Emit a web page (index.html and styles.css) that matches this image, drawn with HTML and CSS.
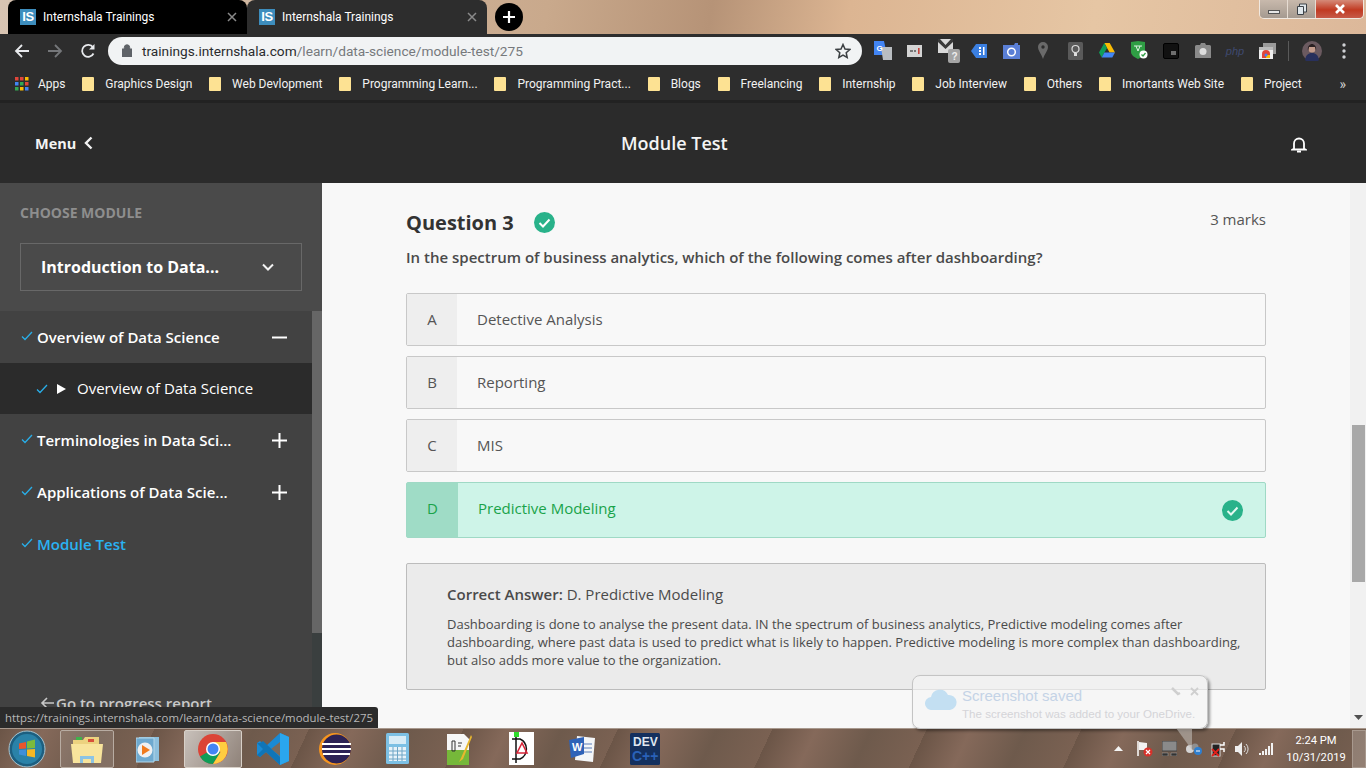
FILE: index.html
```html
<!DOCTYPE html>
<html lang="en">
<head>
    <meta charset="UTF-8">
    <meta name="viewport" content="width=device-width, initial-scale=1.0">
    <title>Internshala Trainings</title>
    <link rel="stylesheet" href="styles.css">
</head>
<body>
    <div class="tabstrip">
        <div class="tab">
            <span class="favicon">IS</span>
            <span class="tab-title">Internshala Trainings</span>
            <svg class="tab-close" width="10" height="10" viewBox="0 0 10 10"><path d="M1 1l8 8M9 1l-8 8" stroke="#8a8a8a" stroke-width="1.5"/></svg>
        </div>
        <div class="tab tab-active">
            <span class="favicon">IS</span>
            <span class="tab-title">Internshala Trainings</span>
            <svg class="tab-close" width="10" height="10" viewBox="0 0 10 10"><path d="M1 1l8 8M9 1l-8 8" stroke="#8a8a8a" stroke-width="1.5"/></svg>
        </div>
        <div class="new-tab">
            <svg width="14" height="14" viewBox="0 0 14 14"><path d="M7 1v12M1 7h12" stroke="#fff" stroke-width="2.2"/></svg>
        </div>
        <div class="window-controls">
            <div class="win-btn"><span class="win-min"></span></div>
            <div class="win-btn">
                <svg width="12" height="13" viewBox="0 0 12 13"><path d="M3.5 3V1h7v8H8M1.500 3.500h6v8h-6z" fill="#dfe6ea" stroke="#3c4248"/></svg>
            </div>
            <div class="win-btn win-close">
                <svg width="12" height="10" viewBox="0 0 12 10"><path d="M2 1l8 8M10 1l-8 8" stroke="#fff" stroke-width="2.600"/></svg>
            </div>
        </div>
    </div>

    <div class="toolbar">
        <svg class="nav-icon" width="16" height="16" viewBox="0 0 16 16"><path d="M15 8H2M8 2L2 8l6 6" fill="none" stroke="#e8eaed" stroke-width="1.800"/></svg>
        <svg class="nav-icon" width="16" height="16" viewBox="0 0 16 16"><path d="M1 8h13M8 2l6 6-6 6" fill="none" stroke="#75777a" stroke-width="1.800"/></svg>
        <svg class="nav-icon" width="16" height="16" viewBox="0 0 16 16"><path d="M13.500 10.500A6 6 0 1 1 13 4.300" fill="none" stroke="#e8eaed" stroke-width="1.800"/><path d="M14.500 1v5.500H9z" fill="#e8eaed"/></svg>
        <div class="omnibox">
            <svg width="10" height="13" viewBox="0 0 10 13"><path d="M0 5h10v8H0zM2.300 5V3.500a2.700 2.700 0 0 1 5.400 0V5" fill="#5f6368" stroke="#5f6368" stroke-width="1"/></svg>
            <span class="url"><span class="url-host">trainings.internshala.com</span>/learn/data-science/module-test/275</span>
            <svg class="star" width="16" height="16" viewBox="0 0 16 16"><path d="M8 1.500l2 4.500 4.800.5-3.600 3.200 1 4.800L8 12.100l-4.200 2.400 1-4.800L1.200 6.500 6 6z" fill="none" stroke="#3c4043" stroke-width="1.500"/></svg>
        </div>
        <div class="extensions">
            <div class="ext"><svg width="18" height="20" viewBox="0 0 18 20"><path d="M0 0h10l3 14H0z" fill="#4285f4"/><path d="M7 6h11v13H9z" fill="#b9bdc1"/><text x="2.500" y="10" font-size="8" font-weight="700" fill="#fff" font-family="Liberation Sans">G</text></svg></div>
            <div class="ext"><svg width="16" height="14" viewBox="0 0 16 14"><rect y="1" width="15" height="12" fill="#d4d4d4"/><path d="M3 6h3v2H3zM7 6h2v2H7z" fill="#777"/><path d="M11 4h1.600v6H11z" fill="#c5443c"/></svg></div>
            <div class="ext ext-mail"><svg width="24" height="26" viewBox="0 0 24 26"><path d="M0 1h15v14H0z" fill="#d9d9d9"/><path d="M2 1l5.500 6L13 1l2 0v3l-7.500 7L0 4V1z" fill="#3a3a3a"/><rect x="10" y="11" width="12" height="14" rx="2" fill="#a4a4a4"/><text x="13.500" y="22" font-size="10" font-weight="700" fill="#eee" font-family="Liberation Sans">?</text></svg></div>
            <div class="ext"><svg width="16" height="16" viewBox="0 0 16 16"><path d="M5 1h11v14H5L0 8z" fill="#3b7fe0"/><path d="M8 4h2v2H8zM8 7h2v2H8zM8 10h2v2H8zM12 4h1.500v8H12z" fill="#fff"/></svg></div>
            <div class="ext"><svg width="17" height="16" viewBox="0 0 17 16"><path d="M0 2h11l1-2h3v2h2v14H0z" fill="#5a7fd6"/><circle cx="8.500" cy="9" r="3.800" fill="none" stroke="#fff" stroke-width="1.500"/></svg></div>
            <div class="ext"><svg width="10" height="17" viewBox="0 0 10 17"><path d="M5 0a5 5 0 0 1 5 5c0 3.500-3.500 7-5 12C3.500 12 0 8.500 0 5a5 5 0 0 1 5-5z" fill="#6a6a6a"/><circle cx="5" cy="5" r="1.700" fill="#2d2d2d"/></svg></div>
            <div class="ext"><svg width="15" height="18" viewBox="0 0 15 18"><rect width="15" height="18" rx="1.500" fill="#5a5a5a"/><circle cx="7.500" cy="7" r="3.500" fill="none" stroke="#ddd" stroke-width="1.200"/><path d="M6 11h3v3H6z" fill="#ddd"/></svg></div>
            <div class="ext"><svg width="16" height="15" viewBox="0 0 16 15"><path d="M5.300 0h5.400L16 9.500H10.600z" fill="#fbbc04"/><path d="M5.300 0L0 9.500l2.700 5L8 5z" fill="#0f9d58"/><path d="M2.700 14.500h10.600L16 9.500H5.400z" fill="#4285f4"/></svg></div>
            <div class="ext"><svg width="17" height="19" viewBox="0 0 17 19"><path d="M0 1l7-1 7 1v10c0 3-3 5-7 7-4-2-7-4-7-7z" fill="#2f9e44"/><path d="M3 5h8M5 5l2 5M9 5l-2 5" stroke="#dff3e3" fill="none"/><circle cx="12.500" cy="13.500" r="4" fill="#fff"/><path d="M10.500 13.500l1.500 1.500 2.500-3" stroke="#2f9e44" fill="none" stroke-width="1.300"/></svg></div>
            <div class="ext"><svg width="16" height="16" viewBox="0 0 16 16"><rect x=".5" y=".5" width="15" height="15" rx="1.500" fill="#111" stroke="#000"/><rect x="8" y="8" width="5" height="4" fill="#6e6e6e"/></svg></div>
            <div class="ext"><svg width="16" height="15" viewBox="0 0 16 15"><path d="M1.500 2H5l1-2h4l1 2h3.500A1.500 1.500 0 0 1 16 3.500V15H0V3.500A1.500 1.500 0 0 1 1.500 2z" fill="#8a8a8a"/><circle cx="8" cy="8.500" r="3.500" fill="#ddd"/></svg></div>
            <div class="ext"><span class="php">php</span></div>
            <div class="ext"><svg width="17" height="16" viewBox="0 0 17 16"><path d="M4 0h13v11H4z" fill="#9a9a9a"/><path d="M0 4h14v12H0z" fill="#eee"/><path d="M0 4h14v3H0z" fill="#bbb"/><path d="M3 15V11a4 4 0 0 1 8 0v4z" fill="#e0463a"/><path d="M7 15v-3h4v3z" fill="#fbbc04"/><circle cx="7" cy="12" r="1.500" fill="#4285f4"/></svg></div>
        </div>
        <div class="toolbar-divider"></div>
        <svg class="avatar" width="20" height="20" viewBox="0 0 20 20"><circle cx="10" cy="10" r="10" fill="#6b5a60"/><path d="M3 19c1-5 3-7 7-7s6 2 7 7a10 10 0 0 1-14 0z" fill="#28305c"/><circle cx="10" cy="8" r="3.500" fill="#c49c8c"/><path d="M6 10c-1-5 2-7 4-7s5 2 4 7l-1-4H7z" fill="#2a2022"/></svg>
        <svg class="menu-dots" width="4" height="16" viewBox="0 0 4 16"><circle cx="2" cy="2" r="1.700" fill="#cfd1d4"/><circle cx="2" cy="8" r="1.700" fill="#cfd1d4"/><circle cx="2" cy="14" r="1.700" fill="#cfd1d4"/></svg>
    </div>

    <div class="bookmarks">
        <div class="bookmark apps">
            <svg width="14" height="14" viewBox="0 0 14 14"><path d="M0 0h3.500v3.500H0z" fill="#e0463a"/><path d="M5 0h3.500v3.500H5z" fill="#e0463a"/><path d="M10 0h3.500v3.500H10z" fill="#fbbc04"/><path d="M0 5h3.500v3.500H0z" fill="#4285f4"/><path d="M5 5h3.500v3.500H5z" fill="#34a853"/><path d="M10 5h3.500v3.500H10z" fill="#e0463a"/><path d="M0 10h3.500v3.500H0z" fill="#34a853"/><path d="M5 10h3.500v3.500H5z" fill="#fbbc04"/><path d="M10 10h3.500v3.500H10z" fill="#4285f4"/></svg>
            <span>Apps</span>
        </div>
        <div class="bookmark"><span class="folder"></span><span>Graphics Design</span></div>
        <div class="bookmark"><span class="folder"></span><span>Web Devlopment</span></div>
        <div class="bookmark"><span class="folder"></span><span>Programming Learn...</span></div>
        <div class="bookmark"><span class="folder"></span><span>Programming Pract...</span></div>
        <div class="bookmark"><span class="folder"></span><span>Blogs</span></div>
        <div class="bookmark"><span class="folder"></span><span>Freelancing</span></div>
        <div class="bookmark"><span class="folder"></span><span>Internship</span></div>
        <div class="bookmark"><span class="folder"></span><span>Job Interview</span></div>
        <div class="bookmark"><span class="folder"></span><span>Others</span></div>
        <div class="bookmark"><span class="folder"></span><span>Imortants Web Site</span></div>
        <div class="bookmark"><span class="folder"></span><span>Project</span></div>
        <span class="more-bookmarks">»</span>
    </div>

    <header class="app-header">
        <div class="menu-toggle">
            <span>Menu</span>
            <svg width="9" height="14" viewBox="0 0 9 14"><path d="M7.500 1.500L2 7l5.500 5.500" fill="none" stroke="#f2f2f2" stroke-width="2.400"/></svg>
        </div>
        <div class="page-title">Module Test</div>
        <svg class="bell" width="16" height="17" viewBox="0 0 16 17"><path d="M3 12.500V7.500a5 5 0 0 1 10 0v5l1.500 1H1.500z" fill="none" stroke="#fff" stroke-width="1.800"/><path d="M6 15.500h4" stroke="#fff" stroke-width="2"/></svg>
    </header>

    <div class="main">
        <aside class="sidebar">
            <div class="sidebar-top">
                <div class="choose-label">CHOOSE MODULE</div>
                <div class="module-select">
                    <span>Introduction to Data...</span>
                    <svg width="12" height="8" viewBox="0 0 12 8"><path d="M1 1.500l5 5 5-5" fill="none" stroke="#f2f2f2" stroke-width="2"/></svg>
                </div>
            </div>
            <div class="tree-wrap">
                <div class="tree">
                    <div class="tree-row">
                        <svg class="tick" width="12" height="10" viewBox="0 0 12 10"><path d="M1 5.500l3 3L11 1" fill="none" stroke="#29aee8" stroke-width="1.300"/></svg>
                        <span class="tree-text">Overview of Data Science</span>
                        <svg class="tree-toggle" width="15" height="15" viewBox="0 0 15 15"><path d="M0 7.500h15" stroke="#fff" stroke-width="2"/></svg>
                    </div>
                    <div class="tree-row tree-sub">
                        <svg class="tick" width="12" height="10" viewBox="0 0 12 10"><path d="M1 5.500l3 3L11 1" fill="none" stroke="#29aee8" stroke-width="1.300"/></svg>
                        <svg class="play" width="9" height="10" viewBox="0 0 9 10"><path d="M0 0l9 5-9 5z" fill="#fff"/></svg>
                        <span class="tree-text">Overview of Data Science</span>
                    </div>
                    <div class="tree-row">
                        <svg class="tick" width="12" height="10" viewBox="0 0 12 10"><path d="M1 5.500l3 3L11 1" fill="none" stroke="#29aee8" stroke-width="1.300"/></svg>
                        <span class="tree-text">Terminologies in Data Sci...</span>
                        <svg class="tree-toggle" width="15" height="15" viewBox="0 0 15 15"><path d="M0 7.500h15M7.500 0v15" stroke="#fff" stroke-width="2"/></svg>
                    </div>
                    <div class="tree-row">
                        <svg class="tick" width="12" height="10" viewBox="0 0 12 10"><path d="M1 5.500l3 3L11 1" fill="none" stroke="#29aee8" stroke-width="1.300"/></svg>
                        <span class="tree-text">Applications of Data Scie...</span>
                        <svg class="tree-toggle" width="15" height="15" viewBox="0 0 15 15"><path d="M0 7.500h15M7.500 0v15" stroke="#fff" stroke-width="2"/></svg>
                    </div>
                    <div class="tree-row tree-current">
                        <svg class="tick" width="12" height="10" viewBox="0 0 12 10"><path d="M1 5.500l3 3L11 1" fill="none" stroke="#29aee8" stroke-width="1.300"/></svg>
                        <span class="tree-text">Module Test</span>
                    </div>
                    <div class="progress-link">
                        <svg width="14" height="12" viewBox="0 0 14 12"><path d="M14 6H2M7 1L2 6l5 5" fill="none" stroke="#c8c8c8" stroke-width="1.600"/></svg>
                        <span>Go to progress report</span>
                    </div>
                </div>
                <div class="side-scroll"><div class="side-thumb"></div></div>
            </div>
        </aside>

        <main class="content">
            <div class="question-head">
                <h2>Question 3</h2>
                <svg class="check-badge" width="21" height="21" viewBox="0 0 21 21"><circle cx="10.500" cy="10.500" r="10.500" fill="#29b28a"/><path d="M5.500 11l3.500 3.500 6.500-7" fill="none" stroke="#fff" stroke-width="2"/></svg>
                <span class="marks">3 marks</span>
            </div>
            <p class="question-text">In the spectrum of business analytics, which of the following comes after dashboarding?</p>

            <div class="options">
                <div class="option"><div class="option-key">A</div><div class="option-text">Detective Analysis</div></div>
                <div class="option"><div class="option-key">B</div><div class="option-text">Reporting</div></div>
                <div class="option"><div class="option-key">C</div><div class="option-text">MIS</div></div>
                <div class="option option-correct">
                    <div class="option-key">D</div>
                    <div class="option-text">Predictive Modeling</div>
                    <svg class="check-badge" width="21" height="21" viewBox="0 0 21 21"><circle cx="10.500" cy="10.500" r="10.500" fill="#29b28a"/><path d="M5.500 11l3.500 3.500 6.500-7" fill="none" stroke="#e4f8f1" stroke-width="2"/></svg>
                </div>
            </div>

            <div class="answer-box">
                <div class="answer-title"><b>Correct Answer:</b> D. Predictive Modeling</div>
                <p class="answer-body">Dashboarding is done to analyse the present data. IN the spectrum of business analytics, Predictive modeling comes after dashboarding, where past data is used to predict what is likely to happen. Predictive modeling is more complex than dashboarding, but also adds more value to the organization.</p>
            </div>
        </main>

        <div class="page-scroll">
            <div class="page-thumb"></div>
            <svg class="page-arrow" width="9" height="5" viewBox="0 0 9 5"><path d="M0 0h9L4.500 5z" fill="#505050"/></svg>
        </div>

        <div class="status-bubble">https://trainings.internshala.com/learn/data-science/module-test/275</div>
    </div>

    <footer class="taskbar">
        <div class="start-orb">
            <svg width="38" height="38" viewBox="0 0 38 38">
                <circle cx="19" cy="19" r="18" fill="#1d5f80" stroke="#a9c4cf" stroke-width="1"/>
                <circle cx="19" cy="19" r="15" fill="#2a82a8"/>
                <path d="M11 13.500l7-1.500v6.500l-7 .5z" fill="#e8562c"/>
                <path d="M19 11.500l8-2v8.500l-8 .5z" fill="#7cba3c"/>
                <path d="M11 20l7-.5v6.500l-7-1.500z" fill="#3f8fd8"/>
                <path d="M19 19.500l8-.5v8.500l-8-1.500z" fill="#f5b824"/>
            </svg>
        </div>
        <div class="task-item task-open">
            <svg width="32" height="30" viewBox="0 0 32 30"><path d="M2 6h10l2-3h14v24H2z" fill="#ecd27f"/><path d="M5 3h6v3H5z" fill="#3fb24a"/><path d="M17 5h6v3h-6z" fill="#d8503a"/><path d="M0 10h32l-2 19H2z" fill="#f8e49c"/><path d="M9 29v-7h14v7h-3v-4h-8v4z" fill="#8cc4e4"/></svg>
        </div>
        <div class="task-item">
            <svg width="26" height="28" viewBox="0 0 26 28"><path d="M3 2h20v24H3z" fill="#8dbfdc"/><path d="M0 3h18v24H0z" fill="#6ea9cf" stroke="#b4d6e8"/><circle cx="9" cy="15" r="7.500" fill="#f0f0f0"/><path d="M6 10l8 5-8 5z" fill="#f07a1c"/></svg>
        </div>
        <div class="task-item task-active">
            <svg width="30" height="30" viewBox="0 0 30 30"><circle cx="15" cy="15" r="15" fill="#db4437"/><path d="M15 15L2 22.500A15 15 0 0 0 15 30l7.500-12z" fill="#0f9d58"/><path d="M15 8h13a15 15 0 0 1-13 22l7.500-12z" fill="#ffcd40"/><path d="M2 7.500l6.500 11L15 15z" fill="#db4437"/><circle cx="15" cy="15" r="7" fill="#fff"/><circle cx="15" cy="15" r="5.500" fill="#4285f4"/></svg>
        </div>
        <div class="task-item">
            <svg width="32" height="32" viewBox="0 0 32 32"><path d="M23 0l9 4v24l-9 4-14-13-6 5-3-2v-12l3-2 6 5z" fill="#1a8ad4"/><path d="M23 9l-9 7 9 7z" fill="#7b6a5c"/><path d="M23 0l9 4v24l-9 4z" fill="#2aa6ee"/><path d="M3 10l3-2 17 16v8L9 19l-6 5-3-2 6-6-6-6z" fill="#0f75b8"/></svg>
        </div>
        <div class="task-item">
            <svg width="32" height="32" viewBox="0 0 32 32"><circle cx="16" cy="16" r="16" fill="#f6951e"/><circle cx="17.500" cy="16" r="14.500" fill="#2c2255"/><path d="M3 11h29M3 16h29M4 21h27" stroke="#fff" stroke-width="2"/></svg>
        </div>
        <div class="task-item">
            <svg width="23" height="31" viewBox="0 0 23 31"><rect width="23" height="31" rx="1.500" fill="#7cc0e4"/><rect x="3" y="3" width="17" height="8" fill="#d8ecf6"/><path d="M3 14h17v14H3z" fill="#e8f3f9"/><path d="M3 18h17M3 22h17M3 26h17M7 14v14M11.500 14v14M16 14v14" stroke="#6ea6c6"/></svg>
        </div>
        <div class="task-item">
            <svg width="26" height="32" viewBox="0 0 26 32"><path d="M1 1h17l5 5v26H1z" fill="#f6f6f6"/><path d="M1 17h22v15H1z" fill="#76b83a"/><path d="M6 8v10h3V8z" fill="none" stroke="#333"/><path d="M12 10h4M12 13h3" stroke="#333"/><path d="M25 2L15 25l-2 4 4-3L26 4z" fill="#e8b72e"/></svg>
        </div>
        <div class="task-item">
            <svg width="25" height="33" viewBox="0 0 25 33"><rect width="25" height="33" fill="#fff"/><rect x="5" y="0" width="5" height="5" fill="#2fdc2a"/><path d="M7 5v26M3 7h8a11 11 0 0 1 0 20H3" fill="none" stroke="#111" stroke-width="1.500"/><path d="M13 11l-5 10h10z" fill="none" stroke="#d8263a" stroke-width="1.600"/></svg>
        </div>
        <div class="task-item">
            <svg width="28" height="30" viewBox="0 0 28 30"><path d="M8 2l18 2-2 24-18-2z" fill="#f4f6f8"/><path d="M0 6l15-3v17L2 24z" fill="#2f63b8"/><path d="M15 10h8M15 14h8M15 18h8" stroke="#5a7cb8"/><text x="3" y="17" font-size="11" font-weight="700" fill="#fff" font-family="Liberation Sans">W</text></svg>
        </div>
        <div class="task-item">
            <svg width="30" height="32" viewBox="0 0 30 32"><rect width="30" height="32" rx="1.500" fill="#14305e"/><text x="3" y="13" font-size="12" font-weight="700" fill="#dfe6f0" font-family="Liberation Sans">DEV</text><text x="2" y="28" font-size="14" font-weight="700" fill="#2a62b8" font-family="Liberation Sans">C++</text></svg>
        </div>

        <div class="tray">
            <svg class="tray-up" width="9" height="5" viewBox="0 0 9 5"><path d="M4.500 0L9 5H0z" fill="#f4f4f4"/></svg>
            <svg width="16" height="16" viewBox="0 0 16 16"><path d="M1 0v15" stroke="#fff" stroke-width="1.500"/><path d="M2 1l8 1v7H2z" fill="#f2f2f2"/><circle cx="11" cy="11" r="4.500" fill="#d8312a"/><path d="M9 9l4 4M13 9l-4 4" stroke="#fff" stroke-width="1.200"/></svg>
            <svg width="15" height="15" viewBox="0 0 15 15"><rect width="15" height="10" fill="#8a8a8a" stroke="#444"/><path d="M0 12h6v3H0zM9 12h6v3H9z" fill="#333" stroke="#aaa" stroke-width=".5"/></svg>
            <svg width="16" height="12" viewBox="0 0 16 12"><circle cx="4" cy="6" r="4" fill="#d4d4d4"/><circle cx="9" cy="4" r="3.500" fill="#8f8f8f"/><circle cx="12" cy="8" r="4" fill="#2e7fd0"/><path d="M10 8h4" stroke="#fff"/></svg>
            <svg width="15" height="16" viewBox="0 0 15 16"><rect x="1" y="3" width="8" height="12" fill="#222" stroke="#ddd"/><path d="M9 4h4V1M9 8h4v3" fill="none" stroke="#fff" stroke-width="1.500"/><path d="M1 8l7 7M8 8l-7 7" stroke="#e0201a" stroke-width="1.800"/></svg>
            <svg width="15" height="14" viewBox="0 0 15 14"><path d="M0 4h3l4-4v14l-4-4H0z" fill="#eee"/><path d="M9 4a4 4 0 0 1 0 6M11 2a7 7 0 0 1 0 10" fill="none" stroke="#ddd"/></svg>
            <svg width="15" height="12" viewBox="0 0 15 12"><path d="M0 10h2v2H0zM3 8h2v4H3zM6 6h2v6H6zM9 3h2v9H9zM12 0h2v12h-2z" fill="#f2f2f2"/></svg>
            <div class="clock">
                <span>2:24 PM</span>
                <span>10/31/2019</span>
            </div>
        </div>
        <div class="show-desktop"></div>
    </footer>

    <div class="toast">
        <svg width="32" height="22" viewBox="0 0 32 22"><path d="M7 22a6.500 6.500 0 0 1-1-13 9 9 0 0 1 17-2 7.500 7.500 0 0 1 2 15z" fill="#c3dff2"/></svg>
        <div class="toast-text">
            <div class="toast-title">Screenshot saved</div>
            <div class="toast-body">The screenshot was added to your OneDrive.</div>
        </div>
        <svg class="toast-tools" width="28" height="10" viewBox="0 0 28 10"><path d="M1 1l6 6 2-1" stroke="#cfcfcf" stroke-width="2.500" fill="none"/><path d="M20 1l7 7M27 1l-7 7" stroke="#cfcfcf" stroke-width="1.800"/></svg>
    </div>
    <div class="toast-tail"></div>
</body>
</html>
```

FILE: styles.css
```css
* {
    box-sizing: border-box;
}
html, body {
    height: 100%;
}
body {
    margin: 0;
    width: 1366px;
    height: 768px;
    overflow: hidden;
    display: flex;
    flex-direction: column;
    position: relative;
    font-family: "Open Sans", Arial, sans-serif;
    background-color: #f8f8f8;
}

/* browser chrome */
.tabstrip {
    height: 34px;
    flex-shrink: 0;
    display: flex;
    align-items: stretch;
    padding-left: 8px;
    background: linear-gradient(100deg, #d8c4b2 0, #c9a98c 40%, #b69377 52%, #dcb592 62%, #e6c6a4 80%, #dcb89a 100%);
}
.tab {
    width: 239px;
    display: flex;
    align-items: center;
    padding: 0 10px 0 12px;
    background-color: #000;
    border-radius: 8px 8px 0 0;
    color: #fff;
    font-family: Roboto, Arial, sans-serif;
    font-size: 12px;
}
.tab-active {
    width: 240px;
    background-color: #2d2d2d;
}
.favicon {
    width: 16px;
    height: 16px;
    background-color: #3d8dbd;
    color: #fff;
    font-family: "Liberation Sans", Arial, sans-serif;
    font-size: 13px;
    font-weight: 700;
    line-height: 16px;
    text-align: center;
    margin-right: 7px;
    letter-spacing: -0.5px;
}
.tab-title {
    flex: 1;
}
.new-tab {
    width: 28px;
    height: 28px;
    margin: 3px 0 0 8px;
    border-radius: 50%;
    background-color: #000;
    display: flex;
    align-items: center;
    justify-content: center;
}
.window-controls {
    margin-left: auto;
    margin-right: 2px;
    height: 19px;
    display: flex;
    border: 1px solid #f0e8e0;
    border-top: none;
    border-radius: 0 0 5px 5px;
    overflow: hidden;
}
.win-btn {
    width: 28px;
    display: flex;
    align-items: center;
    justify-content: center;
    background: linear-gradient(#c8b9ac, #a59a90);
    border-right: 1px solid #e6dcd2;
}
.win-close {
    width: 47px;
    border-right: none;
    background: linear-gradient(#d58a78, #c13a22 55%, #c65a48);
}
.win-min {
    width: 12px;
    height: 4px;
    margin-top: 6px;
    background-color: #e6e6e6;
    border: 1px solid #555;
}
.toolbar {
    height: 33px;
    flex-shrink: 0;
    display: flex;
    align-items: center;
    padding-left: 14px;
    background-color: #2d2d2d;
}
.nav-icon {
    margin-right: 17px;
}
.omnibox {
    width: 754px;
    height: 28px;
    margin-left: -5px;
    display: flex;
    align-items: center;
    padding: 0 11px 0 14px;
    background-color: #f1f3f4;
    border-radius: 14px;
}
.url {
    flex: 1;
    margin-left: 10px;
    color: #76797c;
    font-family: Roboto, Arial, sans-serif;
    font-size: 13.700px;
}
.url-host {
    color: #2a2b2d;
}
.extensions {
    display: flex;
    margin-left: 5px;
}
.ext {
    width: 32px;
    height: 28px;
    display: flex;
    align-items: center;
    justify-content: center;
}
.ext-mail {
    padding-left: 6px;
}
.php {
    color: #3f4a70;
    font-family: "Liberation Sans", Arial, sans-serif;
    font-size: 11px;
    font-style: italic;
}
.toolbar-divider {
    width: 1px;
    height: 20px;
    margin-left: 5px;
    background-color: #5a5a5a;
}
.avatar {
    margin-left: 13px;
}
.menu-dots {
    margin-left: 20px;
}
.bookmarks {
    height: 33px;
    flex-shrink: 0;
    display: flex;
    align-items: center;
    padding-left: 15px;
    background-color: #2d2d2d;
    color: #f2f2f2;
    font-family: Roboto, Arial, sans-serif;
    font-size: 12px;
    white-space: nowrap;
}
.bookmark {
    display: flex;
    align-items: center;
    margin-right: 16.800px;
}
.bookmark.apps svg {
    margin-right: 9px;
}
.folder {
    width: 12px;
    height: 14px;
    margin-right: 11px;
    background-color: #fde293;
    border-radius: 1px;
}
.more-bookmarks {
    margin-left: auto;
    margin-right: 20px;
    font-size: 14px;
    color: #cfcfcf;
}

/* app header */
.app-header {
    height: 83px;
    flex-shrink: 0;
    display: flex;
    align-items: center;
    padding: 0 59px 0 35px;
    background-color: #2b2b2b;
    border-top: 3px solid #222;
    color: #f4f4f4;
}
.menu-toggle {
    width: 586px;
    display: flex;
    align-items: center;
    gap: 8px;
    font-size: 14.500px;
    font-weight: 700;
}
.page-title {
    flex: 1;
    font-size: 18px;
    font-weight: 600;
}
.bell {
    margin-top: 3px;
}

/* page body */
.main {
    flex: 1;
    display: flex;
    min-height: 0;
    position: relative;
    overflow: hidden;
}
.sidebar {
    width: 322px;
    flex-shrink: 0;
    display: flex;
    flex-direction: column;
    background-color: #4a4a4a;
}
.sidebar-top {
    height: 128px;
    flex-shrink: 0;
    padding: 21px 20px 0;
}
.choose-label {
    color: #8e8e8e;
    font-size: 14px;
    font-weight: 700;
    line-height: 18px;
}
.module-select {
    height: 48px;
    margin-top: 21px;
    display: flex;
    align-items: center;
    justify-content: space-between;
    padding: 0 27px 0 20px;
    border: 1px solid #686868;
    color: #fff;
    font-size: 16px;
    font-weight: 700;
}
.tree-wrap {
    flex: 1;
    display: flex;
    min-height: 0;
}
.tree {
    flex: 1;
    background-color: #424242;
}
.tree-row {
    height: 52px;
    display: flex;
    align-items: center;
    padding: 0 25px 0 21px;
    color: #fff;
    font-size: 15px;
    font-weight: 600;
}
.tree-row .tick {
    margin-right: 4px;
    margin-top: -3px;
}
.tree-text {
    flex: 1;
}
.tree-sub {
    height: 51px;
    padding-left: 36px;
    background-color: #2b2b2b;
    font-weight: 400;
}
.tree-sub .tick {
    margin-right: 9px;
    margin-top: 0;
}
.tree-sub .play {
    margin-right: 11px;
}
.tree-sub .tree-text {
    margin-bottom: 2px;
}
.tree-current {
    color: #2ab2f2;
}
.progress-link {
    margin-top: 123px;
    padding-left: 40px;
    display: flex;
    align-items: center;
    gap: 2px;
    color: #c8c8c8;
    font-size: 15px;
    font-weight: 600;
}
.side-scroll {
    width: 10px;
    background-color: #3a3f3f;
}
.side-thumb {
    height: 322px;
    background-color: #666;
}
.content {
    flex: 1;
    padding: 26px 84px 0;
    background-color: #f8f8f8;
    color: #3c3c3c;
}
.question-head {
    display: flex;
    align-items: center;
    height: 26px;
}
.question-head h2 {
    margin: 0 20px 0 0;
    color: #333;
    font-size: 20px;
    font-weight: 700;
}
.marks {
    margin-left: auto;
    margin-top: -6px;
    color: #555;
    font-size: 15px;
}
.question-text {
    margin: 11px 0 0;
    font-size: 15px;
    font-weight: 600;
    color: #4a4a4a;
    line-height: 22px;
}
.options {
    margin-top: 25px;
    display: flex;
    flex-direction: column;
    gap: 10px;
}
.option {
    height: 53px;
    display: flex;
    align-items: center;
    border: 1px solid #c8c8c8;
    border-radius: 2px;
    font-size: 15px;
}
.option-key {
    width: 50px;
    align-self: stretch;
    display: flex;
    align-items: center;
    justify-content: center;
    padding-bottom: 2px;
    background-color: #eee;
    color: #555;
}
.option-text {
    flex: 1;
    padding: 0 0 2px 20px;
    color: #555;
}
.option-correct {
    height: 56px;
    border-color: #9fd9c5;
    background-color: #cef4e8;
    padding-right: 22px;
}
.option-correct .option-key {
    width: 51px;
    padding-bottom: 5px;
    background-color: #9fdcc6;
    color: #1aa34a;
}
.option-correct .option-text {
    padding-bottom: 5px;
    color: #1aa34a;
}
.answer-box {
    height: 127px;
    margin-top: 25px;
    padding: 19px 20px 0 40px;
    background-color: #ebebeb;
    border: 1px solid #bcbcbc;
    border-radius: 2px;
}
.answer-title {
    font-size: 15px;
    color: #4a4a4a;
    line-height: 22px;
}
.answer-title b {
    font-weight: 600;
}
.answer-body {
    margin: 10px 0 0;
    font-size: 13px;
    line-height: 18px;
    color: #4a4a4a;
}
.page-scroll {
    width: 16px;
    flex-shrink: 0;
    display: flex;
    flex-direction: column;
    align-items: center;
    padding-top: 242px;
    background-color: #f1f1f1;
}
.page-thumb {
    width: 13px;
    height: 157px;
    background-color: #a8a8a8;
}
.page-arrow {
    margin-top: 133px;
}
.status-bubble {
    position: absolute;
    left: 0;
    bottom: 0;
    width: 378px;
    height: 21px;
    padding-left: 5px;
    background-color: #2b2b2b;
    border-radius: 0 3px 0 0;
    color: #b8b8b8;
    font-size: 11.400px;
    line-height: 21px;
    white-space: nowrap;
}

/* windows taskbar */
.taskbar {
    height: 40px;
    flex-shrink: 0;
    display: flex;
    align-items: center;
    background: repeating-linear-gradient(115deg, #6b5547 0, #85695a 40px, #6e5a4c 90px, #7a6152 140px);
    border-top: 1px solid #a8998e;
}
.start-orb {
    width: 56px;
    padding-left: 8px;
    display: flex;
}
.task-item {
    width: 62px;
    height: 38px;
    display: flex;
    align-items: center;
    justify-content: center;
}
.task-open {
    width: 54px;
    margin: 0 4px;
    border: 1px solid #b8aca2;
    border-radius: 2px;
    background-color: rgba(255, 255, 255, 0.12);
}
.task-active {
    width: 58px;
    margin: 0 0 0 4px;
    border: 1px solid #d8d0c8;
    border-radius: 2px;
    background: linear-gradient(120deg, #c8c0ba, #8f8279);
}
.tray {
    margin-left: auto;
    display: flex;
    align-items: center;
    gap: 9px;
}
.tray-up {
    margin-right: 5px;
}
.clock {
    width: 66px;
    display: flex;
    flex-direction: column;
    align-items: center;
    color: #fff;
    font-family: Roboto, Arial, sans-serif;
    font-size: 11.200px;
    line-height: 17px;
}
.show-desktop {
    width: 14px;
    height: 38px;
    margin-left: 3px;
    background-color: rgba(255, 255, 255, 0.2);
    border: 1px solid #a8998e;
}

/* onedrive toast */
.toast {
    position: absolute;
    left: 912px;
    top: 675px;
    width: 296px;
    height: 54px;
    display: flex;
    align-items: flex-start;
    padding: 10px 12px 0;
    background-color: rgba(245, 245, 245, 0.65);
    border: 1px solid #c4c4c4;
    border-radius: 8px;
    box-shadow: 2px 2px 3px rgba(0, 0, 0, 0.4);
    font-family: "Liberation Sans", Arial, sans-serif;
}
.toast svg:first-child {
    margin-top: 2px;
    flex-shrink: 0;
}
.toast-text {
    margin-left: 5px;
}
.toast-title {
    color: #c4d3e6;
    font-size: 15px;
    line-height: 19px;
}
.toast-body {
    margin-top: 2px;
    color: #d4d4d8;
    font-size: 11.600px;
    white-space: nowrap;
}
.toast-tools {
    position: absolute;
    right: 8px;
    top: 11px;
}
.toast-tail {
    position: absolute;
    left: 1176px;
    top: 728px;
    width: 0;
    height: 0;
    border-top: 22px solid rgba(190, 185, 180, 0.6);
    border-left: 16px solid transparent;
}
```
